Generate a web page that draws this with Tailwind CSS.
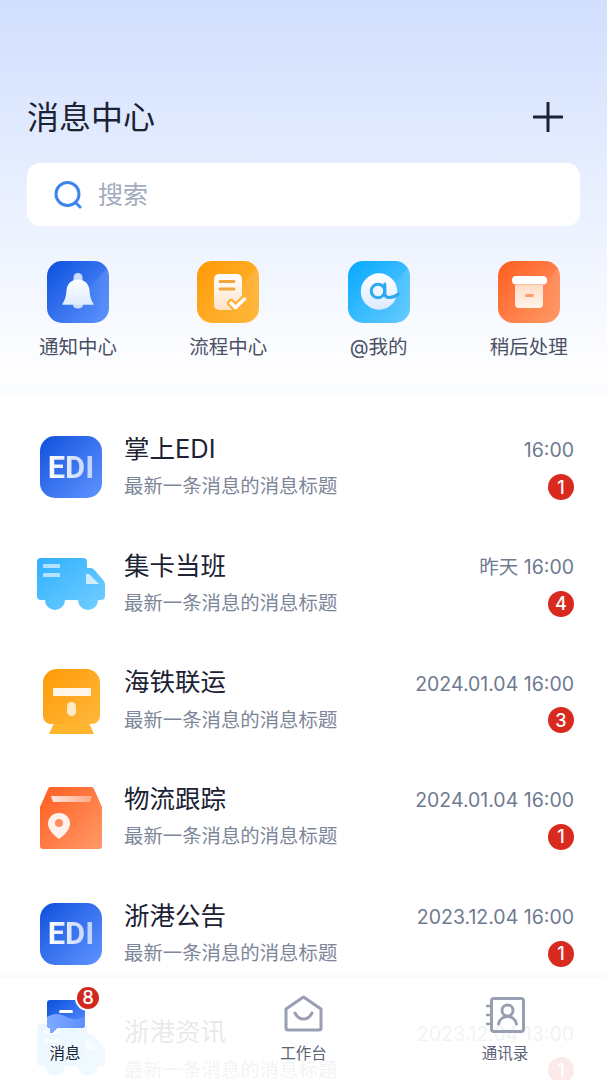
<!DOCTYPE html>
<html lang="zh-CN">
<head>
  <meta charset="UTF-8">
  <title>消息中心</title>
  <script src="https://cdn.jsdelivr.net/npm/@tailwindcss/browser@4"></script>
</head>
<body class="bg-white font-['Inter','Noto_Sans_CJK_SC',sans-serif]">

  <svg class="absolute w-0 h-0" aria-hidden="true">
    <defs>
      <linearGradient id="blue" x1="0" y1="0" x2="1" y2="1"><stop offset="0" stop-color="#0b50dd"/><stop offset="1" stop-color="#5f93ff"/></linearGradient>
      <linearGradient id="orange" x1="0" y1="0" x2="1" y2="1"><stop offset="0" stop-color="#ff9a05"/><stop offset="1" stop-color="#ffb83d"/></linearGradient>
      <linearGradient id="sky" x1="0" y1="0" x2="1" y2="1"><stop offset="0" stop-color="#05a9ff"/><stop offset="1" stop-color="#66cbff"/></linearGradient>
      <linearGradient id="truck" x1="0" y1="0" x2="1" y2="1"><stop offset="0" stop-color="#2fb0ff"/><stop offset="1" stop-color="#74ceff"/></linearGradient>
      <linearGradient id="red" x1="0" y1="0" x2="1" y2="1"><stop offset="0" stop-color="#ff5d1f"/><stop offset="1" stop-color="#ff9a68"/></linearGradient>
      <linearGradient id="paper" x1="0" y1="0" x2="0" y2="1"><stop offset="0" stop-color="#ffffff"/><stop offset="1" stop-color="#dcebff"/></linearGradient>
      <linearGradient id="paperwarm" x1="0" y1="0" x2="0" y2="1"><stop offset="0" stop-color="#ffffff"/><stop offset="1" stop-color="#ffe3c9"/></linearGradient>
      <linearGradient id="crate" x1="0" y1="0" x2="0" y2="1"><stop offset="0" stop-color="#ffdcc6"/><stop offset="1" stop-color="#fff3ea"/></linearGradient>
      <linearGradient id="fade" x1="0" y1="0" x2="1" y2="0"><stop offset="0" stop-color="#ffffff" stop-opacity=".85"/><stop offset="1" stop-color="#ffffff" stop-opacity=".35"/></linearGradient>
      <linearGradient id="sheen" x1="1" y1="0" x2="0.5" y2="0.6"><stop offset="0" stop-color="#ffffff" stop-opacity=".14"/><stop offset="1" stop-color="#ffffff" stop-opacity="0"/></linearGradient>
      <linearGradient id="wave" x1="0" y1="0" x2="1" y2="0"><stop offset="0" stop-color="#7fa9ff"/><stop offset="1" stop-color="#5f8fff"/></linearGradient>
    </defs>
  </svg>

  <div class="relative w-[607px] h-[1080px] overflow-hidden">

    <!-- header -->
    <div class="h-[383px] bg-gradient-to-b from-[#d1dffe] to-white px-[27px] pt-[93px]">
      <div class="flex items-center justify-between h-[48px]">
        <h1 class="text-[32px] leading-[50px] pt-[1px] text-[#1b2233]">消息中心</h1>
        <svg class="w-[30px] h-[30px] mr-[17px]" viewBox="0 0 30 30"><path d="M15 1v28M1 15h28" stroke="#1b2233" stroke-width="3" stroke-linecap="round"/></svg>
      </div>
      <div class="mt-[22px] h-[63px] w-[553px] bg-white rounded-[14px] shadow-[0_0_2px_rgba(255,255,255,0.7)] flex items-center pl-[26px] gap-[15px]">
        <svg class="w-[30px] h-[30px]" viewBox="0 0 30 30" fill="none"><circle cx="14.500" cy="14" r="11.500" stroke="#3d86ee" stroke-width="3"/><path d="M23 23l4 4" stroke="#3d86ee" stroke-width="3" stroke-linecap="round"/></svg>
        <span class="text-[25px] pt-[2px] text-[#a3abbd]">搜索</span>
      </div>
    </div>

    <!-- quick entries, overlaid on the header fade -->
    <div class="absolute left-[3px] top-[261px] w-[601px] grid grid-cols-4">
      <div class="flex flex-col items-center">
        <svg class="w-[62px] h-[62px]" viewBox="0 0 62 62">
          <rect width="62" height="62" rx="15" fill="url(#blue)"/>
          <path d="M62 5L10 62h37a15 15 0 0 0 15-15z" fill="url(#sheen)"/>
          <rect x="26.500" y="12" width="9" height="14" rx="4.500" fill="#c9dbff"/>
          <path d="M26 43h10v1c0 2-2 3.500-5 3.500s-5-1.500-5-3.500z" fill="#c9dbff"/>
          <path d="M31 18.500c7.500 0 11 5 11.500 11 .5 6 1.500 9.500 4 13.200.3.500 0 1.100-.6 1.100H16.100c-.6 0-.9-.6-.6-1.100 2.500-3.700 3.500-7.200 4-13.200.5-6 4-11 11.500-11z" fill="url(#paper)"/>
        </svg>
        <span class="mt-[10px] text-[19.500px] leading-[28px] text-[#4a5164]">通知中心</span>
      </div>
      <div class="flex flex-col items-center">
        <svg class="w-[62px] h-[62px]" viewBox="0 0 62 62">
          <rect width="62" height="62" rx="15" fill="url(#orange)"/>
          <path d="M62 5L10 62h37a15 15 0 0 0 15-15z" fill="url(#sheen)"/>
          <rect x="17" y="13" width="28" height="36" rx="5" fill="url(#paperwarm)"/>
          <path d="M23 20.500h14M23 28h14" stroke="#f3a63e" stroke-width="3" stroke-linecap="round"/>
          <path d="M34 42l4.500 4.500L47.500 38" fill="none" stroke="#ffb035" stroke-width="8" stroke-linecap="round" stroke-linejoin="round"/>
          <path d="M34 42l4.500 4.500L47.500 38" fill="none" stroke="#fff" stroke-width="3.500" stroke-linecap="round" stroke-linejoin="round"/>
        </svg>
        <span class="mt-[10px] text-[19.500px] leading-[28px] text-[#4a5164]">流程中心</span>
      </div>
      <div class="flex flex-col items-center">
        <svg class="w-[62px] h-[62px]" viewBox="0 0 62 62">
          <rect width="62" height="62" rx="15" fill="url(#sky)"/>
          <path d="M62 5L10 62h37a15 15 0 0 0 15-15z" fill="url(#sheen)"/>
          <circle cx="31" cy="30.500" r="18.200" fill="url(#paper)"/>
          <circle cx="30" cy="30" r="6.800" fill="none" stroke="#2ea8ee" stroke-width="3"/>
          <path d="M36.800 23v9c0 3 2 4.500 4.500 4.500 3 0 6-1 9-3.500" fill="none" stroke="#2ea8ee" stroke-width="3" stroke-linecap="round"/>
        </svg>
        <span class="mt-[10px] text-[19.500px] leading-[28px] text-[#4a5164]">@我的</span>
      </div>
      <div class="flex flex-col items-center">
        <svg class="w-[62px] h-[62px]" viewBox="0 0 62 62">
          <rect width="62" height="62" rx="15" fill="url(#red)"/>
          <path d="M62 5L10 62h37a15 15 0 0 0 15-15z" fill="url(#sheen)"/>
          <rect x="14" y="15" width="35" height="8.500" rx="4" fill="#fff"/>
          <path d="M17 24h28v19a4 4 0 0 1-4 4H21a4 4 0 0 1-4-4z" fill="url(#crate)"/>
          <rect x="27" y="33" width="9" height="3" rx="1.500" fill="#ff9a6b"/>
        </svg>
        <span class="mt-[10px] text-[19.500px] leading-[28px] text-[#4a5164]">稍后处理</span>
      </div>
    </div>

    <div class="h-[13px] bg-[#fbfcfd]"></div>

    <!-- conversation list -->
    <ul class="pt-[12.700px] pl-[37px] pr-[33px]">
      <li class="h-[116.670px] flex items-center">
        <div class="w-[68px] flex justify-center shrink-0">
          <div class="w-[62px] h-[62px] rounded-[15px] bg-gradient-to-br from-[#0b50dd] to-[#5f93ff] flex items-center justify-center">
            <span class="font-['Roboto'] text-[31px] leading-none font-bold bg-gradient-to-r from-white to-white/65 bg-clip-text text-transparent">EDI</span>
          </div>
        </div>
        <div class="ml-[19px] flex-1 pt-[3px]">
          <div class="flex justify-between items-center h-[36px]"><span class="text-[25.500px] pb-[2px] text-[#1b2233]">掌上EDI</span><span class="text-[19.500px] pt-[2px] text-[#6f7a90]">16:00</span></div>
          <div class="flex justify-between items-center h-[36px] mt-[1px]"><span class="text-[19.400px] text-[#7d8699]">最新一条消息的消息标题</span><span class="w-[26px] h-[26px] rounded-full bg-[#d92a1f] text-white text-[18px] font-medium flex items-center justify-center">1</span></div>
        </div>
      </li>
      <li class="h-[116.670px] flex items-center">
        <div class="w-[68px] flex justify-center shrink-0">
          <svg class="w-[68px] h-[52px]" viewBox="0 0 68 52">
            <path d="M4 0h42a4 4 0 0 1 4 4v6h3c2 0 3 .5 4.500 2L66 22c1.500 1.500 2 3 2 5v11a4 4 0 0 1-4 4H61a10 10 0 0 1-20 0H28a10 10 0 0 1-20 0H4a4 4 0 0 1-4-4V4a4 4 0 0 1 4-4z" fill="url(#truck)"/>
            <path d="M49 16h3l10 10H49z" fill="#fff" fill-opacity=".7"/>
            <path d="M6 6h17v4H6zM6 15h17v4H6z" fill="#fff" fill-opacity=".6"/>
          </svg>
        </div>
        <div class="ml-[19px] flex-1 pt-[3px]">
          <div class="flex justify-between items-center h-[36px]"><span class="text-[25.500px] pb-[2px] text-[#1b2233]">集卡当班</span><span class="text-[19.500px] pt-[2px] text-[#6f7a90]">昨天 16:00</span></div>
          <div class="flex justify-between items-center h-[36px] mt-[1px]"><span class="text-[19.400px] text-[#7d8699]">最新一条消息的消息标题</span><span class="w-[26px] h-[26px] rounded-full bg-[#d92a1f] text-white text-[18px] font-medium flex items-center justify-center">4</span></div>
        </div>
      </li>
      <li class="h-[116.670px] flex items-center">
        <div class="w-[68px] flex justify-center shrink-0 pt-[2px]">
          <svg class="w-[57px] h-[65px]" viewBox="0 0 57 65">
            <path d="M12 52h33l6 13H6z" fill="#ffb52e"/>
            <path d="M14 0h29a14 14 0 0 1 14 14v33a8 8 0 0 1-8 8H8a8 8 0 0 1-8-8V14A14 14 0 0 1 14 0z" fill="url(#orange)"/>
            <rect x="10" y="19" width="38" height="8" rx="1" fill="#fff" fill-opacity=".9"/>
            <rect x="24" y="33" width="9" height="14" rx="4.500" fill="#fff" fill-opacity=".75"/>
          </svg>
        </div>
        <div class="ml-[19px] flex-1 pt-[3px]">
          <div class="flex justify-between items-center h-[36px]"><span class="text-[25.500px] pb-[2px] text-[#1b2233]">海铁联运</span><span class="text-[19.500px] pt-[2px] text-[#6f7a90]">2024.01.04 16:00</span></div>
          <div class="flex justify-between items-center h-[36px] mt-[1px]"><span class="text-[19.400px] text-[#7d8699]">最新一条消息的消息标题</span><span class="w-[26px] h-[26px] rounded-full bg-[#d92a1f] text-white text-[18px] font-medium flex items-center justify-center">3</span></div>
        </div>
      </li>
      <li class="h-[116.670px] flex items-center">
        <div class="w-[68px] flex justify-center shrink-0 pt-[2px]">
          <svg class="w-[62px] h-[62px]" viewBox="0 0 62 62">
            <path d="M11 0h40a3 3 0 0 1 3 2l8 18v39a3 3 0 0 1-3 3H3a3 3 0 0 1-3-3V20L8 2a3 3 0 0 1 3-2z" fill="url(#red)"/>
            <path d="M11 9h41l-2 6H13z" fill="url(#fade)"/>
            <path d="M19 26c6.500 0 11 4.800 11 10.500 0 5-4.500 11-11 15.500-6.500-4.500-11-10.500-11-15.500C8 30.800 12.500 26 19 26z" fill="#fff" fill-opacity=".9"/>
            <circle cx="19" cy="36" r="4" fill="#ff8d5f"/>
          </svg>
        </div>
        <div class="ml-[19px] flex-1 pt-[3px]">
          <div class="flex justify-between items-center h-[36px]"><span class="text-[25.500px] pb-[2px] text-[#1b2233]">物流跟踪</span><span class="text-[19.500px] pt-[2px] text-[#6f7a90]">2024.01.04 16:00</span></div>
          <div class="flex justify-between items-center h-[36px] mt-[1px]"><span class="text-[19.400px] text-[#7d8699]">最新一条消息的消息标题</span><span class="w-[26px] h-[26px] rounded-full bg-[#d92a1f] text-white text-[18px] font-medium flex items-center justify-center">1</span></div>
        </div>
      </li>
      <li class="h-[116.670px] flex items-center">
        <div class="w-[68px] flex justify-center shrink-0">
          <div class="w-[62px] h-[62px] rounded-[15px] bg-gradient-to-br from-[#0b50dd] to-[#5f93ff] flex items-center justify-center">
            <span class="font-['Roboto'] text-[31px] leading-none font-bold bg-gradient-to-r from-white to-white/65 bg-clip-text text-transparent">EDI</span>
          </div>
        </div>
        <div class="ml-[19px] flex-1 pt-[3px]">
          <div class="flex justify-between items-center h-[36px]"><span class="text-[25.500px] pb-[2px] text-[#1b2233]">浙港公告</span><span class="text-[19.500px] pt-[2px] text-[#6f7a90]">2023.12.04 16:00</span></div>
          <div class="flex justify-between items-center h-[36px] mt-[1px]"><span class="text-[19.400px] text-[#7d8699]">最新一条消息的消息标题</span><span class="w-[26px] h-[26px] rounded-full bg-[#d92a1f] text-white text-[18px] font-medium flex items-center justify-center">1</span></div>
        </div>
      </li>
      <li class="h-[116.670px] flex items-center">
        <div class="w-[68px] flex justify-center shrink-0">
          <svg class="w-[68px] h-[52px]" viewBox="0 0 68 52">
            <path d="M4 0h42a4 4 0 0 1 4 4v6h3c2 0 3 .5 4.500 2L66 22c1.500 1.500 2 3 2 5v11a4 4 0 0 1-4 4H61a10 10 0 0 1-20 0H28a10 10 0 0 1-20 0H4a4 4 0 0 1-4-4V4a4 4 0 0 1 4-4z" fill="url(#truck)"/>
            <path d="M49 16h3l10 10H49z" fill="#fff" fill-opacity=".7"/>
            <path d="M6 6h17v4H6zM6 15h17v4H6z" fill="#fff" fill-opacity=".6"/>
          </svg>
        </div>
        <div class="ml-[19px] flex-1 pt-[3px]">
          <div class="flex justify-between items-center h-[36px]"><span class="text-[25.500px] pb-[2px] text-[#1b2233]">浙港资讯</span><span class="text-[19.500px] pt-[2px] text-[#6f7a90]">2023.12.04 13:00</span></div>
          <div class="flex justify-between items-center h-[36px] mt-[1px]"><span class="text-[19.400px] text-[#7d8699]">最新一条消息的消息标题</span><span class="w-[26px] h-[26px] rounded-full bg-[#d92a1f] text-white text-[18px] font-medium flex items-center justify-center">1</span></div>
        </div>
      </li>
    </ul>

    <!-- tab bar floats over the list -->
    <nav class="absolute left-0 bottom-0 w-full h-[102px] bg-white/90 shadow-[0_-3px_6px_rgba(30,50,90,0.03)] grid grid-cols-[130px_347px_56px]">
      <div class="relative flex flex-col items-center pt-[22px]">
        <svg class="w-[38px] h-[33px] ml-[2px]" viewBox="0 0 38 33">
          <path d="M3 0h32a3 3 0 0 1 3 3v22a3 3 0 0 1-3 3H10l-5 5c-1 .8-2 .3-2-1v-4a3 3 0 0 1-3-3V3a3 3 0 0 1 3-3z" fill="url(#blue)"/>
          <path d="M0 17c8-5 14-3 20 0s12 3 18-1v9a3 3 0 0 1-3 3H10l-5 5c-1 .8-2 .3-2-1v-4a3 3 0 0 1-3-3z" fill="url(#wave)"/>
          <rect x="12" y="10" width="14" height="3" rx="1.500" fill="#fff"/>
        </svg>
        <span class="absolute left-[75px] top-[7px] w-[26px] h-[26px] rounded-full bg-[#d2291e] border-2 border-white text-white text-[18.500px] font-medium flex items-center justify-center">8</span>
        <span class="mt-[9px] text-[15.500px] leading-[24px] text-[#1b2233]">消息</span>
      </div>
      <div class="flex flex-col items-center pt-[17px]">
        <svg class="w-[39px] h-[37px]" viewBox="0 0 39 37" fill="none">
          <path d="M2 14L19.500 2 37 14v19a2 2 0 0 1-2 2H4a2 2 0 0 1-2-2z" stroke="#989fb1" stroke-width="3" stroke-linejoin="round"/>
          <path d="M11 18c2 4 5 6 8.500 6s6.500-2 8.500-6" stroke="#989fb1" stroke-width="3" stroke-linecap="round"/>
        </svg>
        <span class="mt-[10px] text-[15.500px] leading-[24px] text-[#5b6375]">工作台</span>
      </div>
      <div class="flex flex-col items-center pt-[19px] whitespace-nowrap">
        <svg class="w-[39px] h-[36px] shrink-0" viewBox="0 0 39 36" fill="none">
          <rect x="5.500" y="1.500" width="32" height="33" rx="2.500" stroke="#989fb1" stroke-width="3"/>
          <path d="M0 9h5M0 18h5M0 27h5" stroke="#989fb1" stroke-width="2.500"/>
          <circle cx="21.500" cy="13.500" r="5.500" stroke="#989fb1" stroke-width="3"/>
          <path d="M12.500 27c1-5 5-7.500 9-7.500s8 2.500 9 7.500" stroke="#989fb1" stroke-width="3" stroke-linecap="round"/>
        </svg>
        <span class="mt-[9px] text-[15.500px] leading-[24px] text-[#5b6375]">通讯录</span>
      </div>
    </nav>
  </div>

</body>
</html>
